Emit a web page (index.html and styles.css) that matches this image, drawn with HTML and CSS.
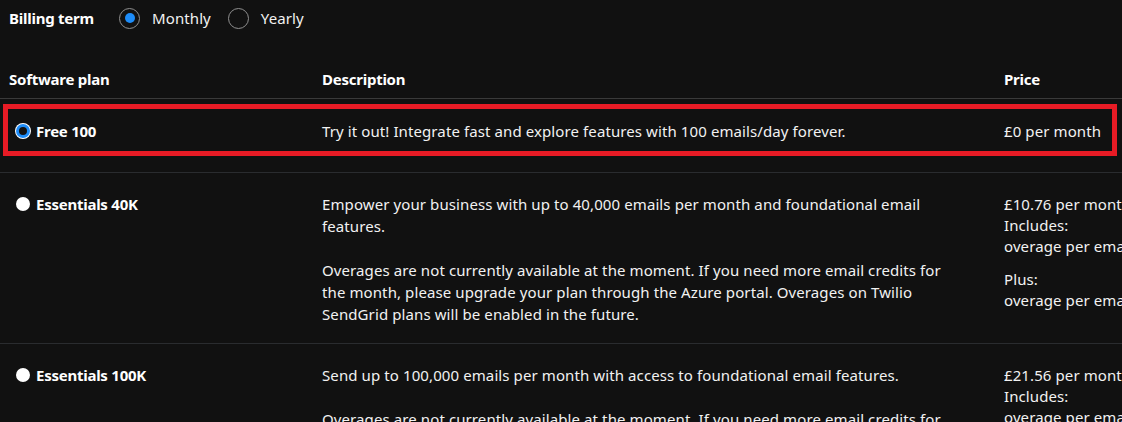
FILE: index.html
```html
<!DOCTYPE html>
<html lang="en">
<head>
<meta charset="utf-8">
<title>Plans</title>
<link rel="stylesheet" href="styles.css">
</head>
<body>
<div class="billing">
  <span class="billing-label">Billing term</span>
  <div class="term-options">
    <label class="term"><span class="ring checked"></span><span>Monthly</span></label>
    <label class="term"><span class="ring"></span><span>Yearly</span></label>
  </div>
</div>

<div class="plans">
  <div class="row head">
    <div class="c-plan">Software plan</div>
    <div class="c-desc">Description</div>
    <div class="c-price">Price</div>
  </div>

  <div class="row selected">
    <div class="c-plan"><span class="dot on"></span><span class="plan-name">Free 100</span></div>
    <div class="c-desc"><p>Try it out! Integrate fast and explore features with 100 emails/day forever.</p></div>
    <div class="c-price"><div class="amount">£0 per month</div></div>
    <div class="highlight"></div>
  </div>

  <div class="row">
    <div class="c-plan"><span class="dot"></span><span class="plan-name">Essentials 40K</span></div>
    <div class="c-desc">
      <p>Empower your business with up to 40,000 emails per month and foundational email features.</p>
      <p>Overages are not currently available at the moment. If you need more email credits for the month, please upgrade your plan through the Azure portal. Overages on Twilio SendGrid plans will be enabled in the future.</p>
    </div>
    <div class="c-price">
      <div class="amount">£10.76 per month</div>
      <div class="sub">Includes:</div>
      <div class="line">overage per email</div>
      <div class="sub plus">Plus:</div>
      <div class="line">overage per email</div>
    </div>
  </div>

  <div class="row">
    <div class="c-plan"><span class="dot"></span><span class="plan-name">Essentials 100K</span></div>
    <div class="c-desc">
      <p>Send up to 100,000 emails per month with access to foundational email features.</p>
      <p>Overages are not currently available at the moment. If you need more email credits for the month, please upgrade your plan through the Azure portal. Overages on Twilio SendGrid plans will be enabled in the future.</p>
    </div>
    <div class="c-price">
      <div class="amount">£21.56 per month</div>
      <div class="sub">Includes:</div>
      <div class="line">overage per email</div>
      <div class="sub plus">Plus:</div>
      <div class="line">overage per email</div>
    </div>
  </div>
</div>
</body>
</html>
```

FILE: styles.css
```css
html, body {
  margin: 0;
  padding: 0;
}
body {
  background: #111111;
  color: #f2f2f2;
  font-family: "Noto Sans", "Open Sans", sans-serif;
  font-size: 15px;
  letter-spacing: 0.1px;
  line-height: 22px;
  overflow: hidden;
  width: 1122px;
  height: 422px;
}
.billing {
  display: flex;
  align-items: center;
  height: 36px;
  padding-left: 9px;
}
.billing-label {
  font-weight: 700;
  letter-spacing: -0.25px;
  color: #fff;
  width: 110px;
}
.term-options {
  display: flex;
  gap: 17px;
}
.term {
  display: flex;
  align-items: center;
  gap: 12px;
}
.ring {
  width: 19px;
  height: 19px;
  border: 1px solid #8f8f8f;
  border-radius: 50%;
  display: flex;
  align-items: center;
  justify-content: center;
}
.ring.checked::after {
  content: "";
  width: 10px;
  height: 10px;
  border-radius: 50%;
  background: #1d8cf8;
}
.plans {
  width: 1122px;
}
.row {
  position: relative;
  display: grid;
  grid-template-columns: 313px 682px 200px;
  padding: 20px 0 18px 9px;
  border-bottom: 1px solid #2a2c2f;
}
.row.head {
  padding: 32px 0 8px 9px;
  font-weight: 700;
  letter-spacing: -0.25px;
  color: #fff;
  border-bottom: 1px solid #3a3a3a;
}
.row.selected {
  padding-top: 21px;
  padding-bottom: 30px;
}
.c-plan {
  display: flex;
  align-items: flex-start;
}
.row:not(.head) .c-plan {
  padding-left: 7px;
  gap: 6px;
}
.plan-name {
  font-weight: 700;
  letter-spacing: -0.25px;
  color: #fff;
}
.dot {
  flex: none;
  width: 14px;
  height: 14px;
  margin-top: 4px;
  border-radius: 50%;
  background: #ffffff;
  box-sizing: border-box;
}
.dot.on {
  background: #111111;
  border: 3px solid #1d8cf8;
  box-shadow: 0 0 0 1px #ffffff;
  width: 14px;
  height: 14px;
  margin: 4px 0 0 0;
}
.c-desc {
  padding-right: 52px;
}
.c-desc p {
  margin: 0 0 22px;
}
.c-desc p:last-child {
  margin-bottom: 0;
}
.c-price {
  white-space: nowrap;
}
.sub {
  line-height: 20px;
}
.sub.plus {
  margin-top: 12px;
}
.line {
  line-height: 22px;
}
.highlight {
  position: absolute;
  left: 3px;
  top: 5px;
  width: 1104px;
  height: 42px;
  border: 5px solid #e81b25;
}
```
